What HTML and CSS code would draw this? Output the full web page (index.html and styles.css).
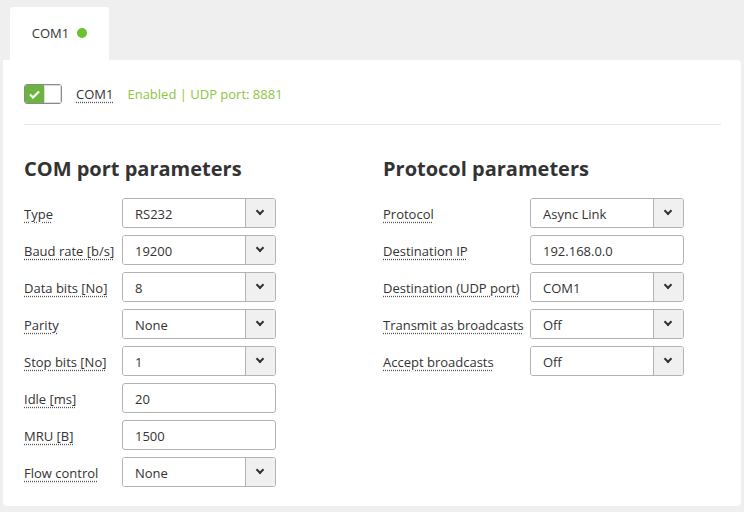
FILE: index.html
```html
<!DOCTYPE html>
<html>
  <head>
    <title>COM1</title>
    <link rel="stylesheet" href="styles.css">
  </head>
  <body>
    <div class="tabs">
      <div class="tab">COM1 <span class="dot"></span></div>
    </div>
    <div class="panel">
      <div class="panel-head">
        <span class="toggle">
          <span class="toggle-on">
            <svg width="11" height="9" viewBox="0 0 11 9"><path d="M1 4.5 L4 7.5 L10 1.5" fill="none" stroke="white" stroke-width="2.2"/></svg>
          </span>
          <span class="toggle-knob"></span>
        </span>
        <span class="hint">COM1</span>
        <span class="status">Enabled | UDP port: 8881</span>
      </div>

      <div class="columns">
        <div class="column">
          <h2>COM port parameters</h2>
          <div class="row">
            <label class="hint">Type</label>
            <div class="select"><select><option>RS232</option></select><span class="arrow"></span></div>
          </div>
          <div class="row">
            <label class="hint">Baud rate [b/s]</label>
            <div class="select"><select><option>19200</option></select><span class="arrow"></span></div>
          </div>
          <div class="row">
            <label class="hint">Data bits [No]</label>
            <div class="select"><select><option>8</option></select><span class="arrow"></span></div>
          </div>
          <div class="row">
            <label class="hint">Parity</label>
            <div class="select"><select><option>None</option></select><span class="arrow"></span></div>
          </div>
          <div class="row">
            <label class="hint">Stop bits [No]</label>
            <div class="select"><select><option>1</option></select><span class="arrow"></span></div>
          </div>
          <div class="row">
            <label class="hint">Idle [ms]</label>
            <input type="text" value="20">
          </div>
          <div class="row">
            <label class="hint">MRU [B]</label>
            <input type="text" value="1500">
          </div>
          <div class="row">
            <label class="hint">Flow control</label>
            <div class="select"><select><option>None</option></select><span class="arrow"></span></div>
          </div>
        </div>

        <div class="column wide">
          <h2>Protocol parameters</h2>
          <div class="row">
            <label class="hint">Protocol</label>
            <div class="select"><select><option>Async Link</option></select><span class="arrow"></span></div>
          </div>
          <div class="row">
            <label class="hint">Destination IP</label>
            <input type="text" value="192.168.0.0">
          </div>
          <div class="row">
            <label class="hint">Destination (UDP port)</label>
            <div class="select"><select><option>COM1</option></select><span class="arrow"></span></div>
          </div>
          <div class="row">
            <label class="hint">Transmit as broadcasts</label>
            <div class="select"><select><option>Off</option></select><span class="arrow"></span></div>
          </div>
          <div class="row">
            <label class="hint">Accept broadcasts</label>
            <div class="select"><select><option>Off</option></select><span class="arrow"></span></div>
          </div>
        </div>
      </div>
    </div>
  </body>
</html>
```

FILE: styles.css
```css
body {
  margin: 0;
  background-color: #efefef;
  font-family: "Open Sans", "Noto Sans", sans-serif;
  font-size: 13px;
  color: #333;
}

/* Tabs */
.tabs {
  display: flex;
  padding: 7px 0 0 10px;
}

.tab {
  display: flex;
  align-items: center;
  justify-content: center;
  gap: 8px;
  width: 99px;
  height: 53px;
  padding-bottom: 1px;
  box-sizing: border-box;
  background-color: white;
  border-radius: 3px 3px 0 0;
  color: #333;
}

.dot {
  width: 10px;
  height: 10px;
  border-radius: 50%;
  background-color: #6cc22c;
}

/* Panel */
.panel {
  margin: 0 3px 6px;
  padding: 0 20px 19px 21px;
  background-color: white;
  border-radius: 0 4px 4px 4px;
}

.panel-head {
  display: flex;
  align-items: center;
  height: 60px;
  padding-top: 4px;
  border-bottom: 1px solid #e6e6e6;
}

.hint {
  text-decoration: underline dotted #555;
  text-underline-offset: 3px;
}

.status {
  margin-left: 14px;
  color: #8cc63f;
}

.toggle {
  display: flex;
  width: 38px;
  height: 20px;
  margin-right: 14px;
  box-sizing: border-box;
  border: 1px solid #8a8a8a;
  border-radius: 3px;
  overflow: hidden;
}

.toggle-on {
  display: flex;
  align-items: center;
  justify-content: center;
  width: 19px;
  background-color: #6db33f;
}

.toggle-knob {
  flex: 1;
  border: 1px solid #ddd;
  background-color: white;
}

/* Columns */
.columns {
  display: grid;
  grid-template-columns: 359px 1fr;
  padding-top: 30px;
}

h2 {
  margin: 0 0 15px;
  font-size: 20px;
  line-height: 28px;
  font-weight: bold;
  color: #333;
}

.row {
  display: flex;
  align-items: center;
  height: 30px;
  margin-bottom: 7px;
}

.row:last-child {
  margin-bottom: 0;
}

.row label {
  width: 98px;
  flex-shrink: 0;
  padding-top: 2px;
}

.wide .row label {
  width: 147px;
}

.select {
  display: flex;
  width: 154px;
  height: 30px;
  box-sizing: border-box;
  border: 1px solid #b3b3b3;
  border-radius: 3px;
  overflow: hidden;
}

.select select {
  flex: 1;
  min-width: 0;
  border: none;
  appearance: none;
  background: white;
  padding: 1px 12px 0;
  font-family: inherit;
  font-size: 13px;
  color: #333;
  outline: none;
}

.arrow {
  position: relative;
  width: 29px;
  border-left: 1px solid #b3b3b3;
  background-color: #f0f0f0;
}

.arrow::after {
  content: "";
  position: absolute;
  left: 11px;
  top: 9px;
  width: 4px;
  height: 4px;
  border-right: 2px solid #333;
  border-bottom: 2px solid #333;
  transform: rotate(45deg);
}

input[type="text"] {
  width: 154px;
  height: 30px;
  box-sizing: border-box;
  border: 1px solid #b3b3b3;
  border-radius: 3px;
  padding: 1px 12px 0;
  font-family: inherit;
  font-size: 13px;
  color: #333;
  outline: none;
}
```
